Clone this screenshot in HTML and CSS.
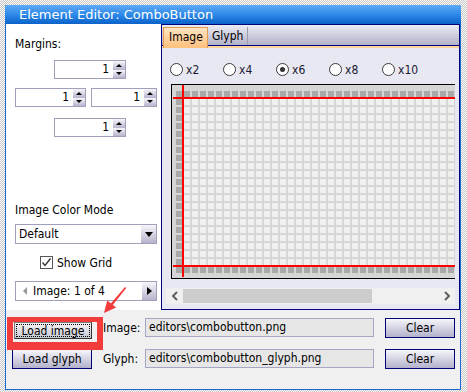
FILE: index.html
```html
<!DOCTYPE html>
<html lang="en">
<head>
  <meta charset="UTF-8" />
  <title>Element Editor: ComboButton</title>
  <link rel="stylesheet" href="styles.css">
</head>
<body>
  <div class="window">
    <div class="titlebar">Element Editor: ComboButton</div>

    <div class="main">
      <div class="side">
        <div class="side-label">Margins:</div>

        <div class="spin-row center">
          <div class="spin w72"><span class="val">1</span><span class="btns"><i class="up"></i><i class="down"></i></span></div>
        </div>
        <div class="spin-row">
          <div class="spin w71"><span class="val">1</span><span class="btns"><i class="up"></i><i class="down"></i></span></div>
          <div class="spin w66"><span class="val">1</span><span class="btns"><i class="up"></i><i class="down"></i></span></div>
        </div>
        <div class="spin-row center last">
          <div class="spin w72"><span class="val">1</span><span class="btns"><i class="up"></i><i class="down"></i></span></div>
        </div>

        <div class="side-label mode-label">Image Color Mode</div>
        <div class="select">
          <span class="select-text">Default</span>
          <span class="drop"><i class="down big"></i></span>
        </div>

        <div class="check">
          <span class="box">
            <svg width="11" height="11" viewBox="0 0 11 11"><polyline points="1.5,5.5 4,8.5 9.5,1.5" fill="none" stroke="#333" stroke-width="1.4"/></svg>
          </span>
          Show Grid
        </div>

        <div class="nav">
          <span class="nav-prev"><i class="left"></i></span>
          <span class="nav-text">Image: 1 of 4</span>
          <span class="nav-next"><i class="right"></i></span>
        </div>
      </div>

      <div class="tabs">
        <div class="tabstrip">
          <span class="tab active">Image</span>
          <span class="tab">Glyph</span>
        </div>
        <div class="tabbody">
          <div class="radios">
            <label class="radio"><span class="dot"></span>x2</label>
            <label class="radio"><span class="dot"></span>x4</label>
            <label class="radio"><span class="dot on"></span>x6</label>
            <label class="radio"><span class="dot"></span>x8</label>
            <label class="radio"><span class="dot"></span>x10</label>
          </div>

          <div class="canvas">
            <svg width="283" height="193" viewBox="0 0 283 193">
              <defs>
                <pattern id="lt" x="4" y="6" width="8" height="8" patternUnits="userSpaceOnUse"><rect width="6" height="6" fill="#f0f0f0"/></pattern>
                <pattern id="dk" x="4" y="6" width="8" height="8" patternUnits="userSpaceOnUse"><rect width="6" height="6" fill="#a9a9a9"/></pattern>
              </defs>
              <rect width="283" height="193" fill="#d6d6d6"/>
              <rect x="4" y="6" width="279" height="182" fill="url(#lt)"/>
              <rect x="4" y="6" width="279" height="6" fill="url(#dk)"/>
              <rect x="4" y="182" width="279" height="6" fill="url(#dk)"/>
              <rect x="4" y="6" width="6" height="182" fill="url(#dk)"/>
              <rect x="10" y="0" width="2" height="192" fill="#f00"/>
              <rect x="1" y="12" width="282" height="2" fill="#f00"/>
              <rect x="1" y="180" width="282" height="2" fill="#f00"/>
            </svg>
          </div>

          <div class="hscroll">
            <span class="sb-arrow">
              <svg width="8" height="10" viewBox="0 0 8 10"><polyline points="6,1 2,5 6,9" fill="none" stroke="#606060" stroke-width="2"/></svg>
            </span>
            <span class="sb-thumb"></span>
            <span class="sb-track"></span>
            <span class="sb-arrow">
              <svg width="8" height="10" viewBox="0 0 8 10"><polyline points="2,1 6,5 2,9" fill="none" stroke="#606060" stroke-width="2"/></svg>
            </span>
          </div>
        </div>
      </div>
    </div>

    <div class="bottom">
      <div class="file-row">
        <button class="btn focus">Load image</button>
        <span class="field-label">Image:</span>
        <span class="field">editors\combobutton.png</span>
        <button class="btn clear">Clear</button>
      </div>
      <div class="file-row second">
        <button class="btn">Load glyph</button>
        <span class="field-label">Glyph:</span>
        <span class="field">editors\combobutton_glyph.png</span>
        <button class="btn clear">Clear</button>
      </div>
    </div>

    <div class="highlight"></div>
    <svg class="arrow" width="32" height="34" viewBox="0 0 32 34">
      <polygon points="25,4 26.3,5.1 12.6,22.3 10.6,20.7" fill="#f23b3b"/>
      <polygon points="4,30 7.2,17.6 16.2,24.6" fill="#f23b3b"/>
    </svg>
  </div>
</body>
</html>
```

FILE: styles.css
```css
* {
  box-sizing: border-box;
}

body {
  margin: 0;
  width: 467px;
  height: 392px;
  overflow: hidden;
  background: repeating-conic-gradient(#c4c4c4 0 25%, #fff 0 50%) 0 0 / 2px 2px;
  font-family: "DejaVu Sans Condensed", "Liberation Sans", sans-serif;
  font-size: 12px;
  color: #000;
}

.window {
  position: relative;
  margin: 5px 0 0 5px;
  width: 456px;
  height: 385px;
  border: 1px solid #1b6bd0;
  border-top: none;
  background: #f0f0f0;
  display: flex;
  flex-direction: column;
}

.titlebar {
  height: 19px;
  margin: 0 -1px;
  padding-left: 14px;
  line-height: 19px;
  color: #fff;
  font-family: "DejaVu Sans", sans-serif;
  font-size: 13px;
  background: linear-gradient(#5eaaf5, #2a86e6 55%, #0b62c9);
}

.main {
  display: flex;
  height: 286px;
}

/* left column */
.side {
  width: 155px;
  background: #fff;
  padding: 13px 3px 0 9px;
}

.side-label {
  height: 14px;
  line-height: 14px;
}

.mode-label {
  margin-top: 66px;
}

.spin-row {
  display: flex;
  gap: 5px;
  margin-top: 9px;
}

.spin-row.center {
  padding-left: 39px;
}

.spin-row.last {
  margin-top: 11px;
}

.spin {
  display: flex;
  height: 19px;
  border: 1px solid #a19fbc;
  background: #fff;
}

.w72 { width: 72px; }
.w71 { width: 71px; }
.w66 { width: 66px; }

.spin .val {
  flex: 1;
  text-align: right;
  padding-right: 4px;
  line-height: 17px;
}

.spin .btns {
  width: 12px;
  display: flex;
  flex-direction: column;
}

.spin .btns i {
  flex: 1;
  display: flex;
  align-items: center;
  justify-content: center;
  background: linear-gradient(#f6f6fb, #b6b4cd);
}

.up::after,
.down::after,
.left::after,
.right::after {
  content: "";
  width: 0;
  height: 0;
  border: 3px solid transparent;
}

.up::after {
  border-top: none;
  border-bottom-color: #000;
}

.down::after {
  border-bottom: none;
  border-top-color: #000;
}

.down.big::after {
  border-width: 5px 4px 0;
}

.left::after {
  border-width: 4px 4px 4px 0;
  border-right-color: #999;
}

.right::after {
  border-width: 4px 0 4px 5px;
  border-left-color: #000;
}

.select {
  display: flex;
  margin-top: 7px;
  width: 142px;
  height: 20px;
  border: 1px solid #a19fbc;
  background: #fff;
}

.select-text {
  flex: 1;
  padding-left: 3px;
  line-height: 18px;
}

.drop,
.nav-next {
  width: 15px;
  display: flex;
  align-items: center;
  justify-content: center;
  background: linear-gradient(#f6f6fb, #b6b4cd);
}

.down.big,
.left,
.right {
  display: flex;
}

.check {
  display: flex;
  align-items: center;
  gap: 4px;
  margin-top: 11px;
  height: 15px;
  padding-left: 25px;
}

.box {
  width: 13px;
  height: 13px;
  border: 1px solid #555;
  background: #fff;
  display: flex;
}

.nav {
  display: flex;
  margin-top: 11px;
  width: 142px;
  height: 20px;
  border: 1px solid #a19fbc;
  background: #fff;
}

.nav-prev {
  width: 17px;
  display: flex;
  align-items: center;
  justify-content: center;
}

.nav-text {
  flex: 1;
  line-height: 18px;
}

.nav-next {
  width: 14px;
}

/* tab control */
.tabs {
  width: 299px;
  border: 1px solid #00007a;
  background: #e8e8f2;
  display: flex;
  flex-direction: column;
}

.tabstrip {
  height: 23px;
  display: flex;
  align-items: flex-end;
  padding-left: 1px;
  background:
    linear-gradient(#ececf4, #b3b2c9) 0 0 / 100% 20px no-repeat,
    linear-gradient(#00007a, #00007a) 0 20px / 100% 1px no-repeat,
    #ffd49a;
}

.tab {
  height: 18px;
  margin-bottom: 3px;
  padding: 0 4px;
  line-height: 18px;
  border-right: 1px solid #9c9cb0;
}

.tab.active {
  height: 21px;
  width: 45px;
  margin-bottom: 0;
  padding: 0 5px;
  line-height: 19px;
  border: 1px solid #e39a52;
  border-bottom: none;
  background: linear-gradient(#ffe4c0, #ffc07c);
}

.tabbody {
  flex: 1;
  padding-top: 15px;
}

.radios {
  display: flex;
  height: 13px;
  padding-left: 8px;
}

.radio {
  width: 53px;
  display: flex;
  align-items: center;
  gap: 3px;
  color: #1a1a33;
}

.dot {
  width: 13px;
  height: 13px;
  border: 1px solid #3a3a3a;
  border-radius: 50%;
  background: #fff;
  display: flex;
  align-items: center;
  justify-content: center;
}

.dot.on::after {
  content: "";
  width: 5px;
  height: 5px;
  border-radius: 50%;
  background: #333;
}

.canvas {
  margin: 8px 0 0 9px;
  width: 284px;
  height: 195px;
  border: 1px solid #000;
  border-right: none;
  display: flex;
}

.hscroll {
  display: flex;
  margin: 9px 0 0 4px;
  width: 289px;
  height: 16px;
  background: #f0f0f0;
}

.sb-arrow {
  width: 17px;
  display: flex;
  align-items: center;
  justify-content: center;
}

.sb-thumb {
  width: 189px;
  margin: 1px 0;
  background: #cdcdcd;
}

.sb-track {
  flex: 1;
}

/* bottom rows */
.bottom {
  flex: 1;
  padding: 8px 0 0 6px;
}

.file-row {
  display: flex;
  align-items: flex-start;
  height: 20px;
}

.file-row.second {
  margin-top: 11px;
}

.btn {
  width: 80px;
  height: 20px;
  margin: 0;
  padding: 0;
  border: 1px solid #00007a;
  background: linear-gradient(#f6f6fb, #b3b1cb);
  font-family: inherit;
  font-size: 12px;
  color: #000;
}

.btn.focus {
  width: 78px;
  height: 17px;
  margin: 4px 0 0 2px;
  border: 1px solid #555;
  border-color: #777 #333 #333 #777;
  background: linear-gradient(#f4f4f4, #c8c8d2);
  outline: 1px dotted #000;
  outline-offset: -3px;
}

.field-label {
  width: 42px;
  margin-left: 11px;
  line-height: 20px;
}

.field {
  width: 229px;
  height: 19px;
  padding-left: 3px;
  line-height: 17px;
  border: 1px solid #a7a5c4;
  background: #e6e6e6;
}

.btn.clear {
  width: 70px;
  margin-left: 11px;
}

/* annotation overlay */
.highlight {
  position: absolute;
  left: 1px;
  top: 312px;
  width: 96px;
  height: 33px;
  border: solid #f23b3b;
  border-width: 5px 6px 8px 6px;
}

.arrow {
  position: absolute;
  left: 94px;
  top: 278px;
}
```
